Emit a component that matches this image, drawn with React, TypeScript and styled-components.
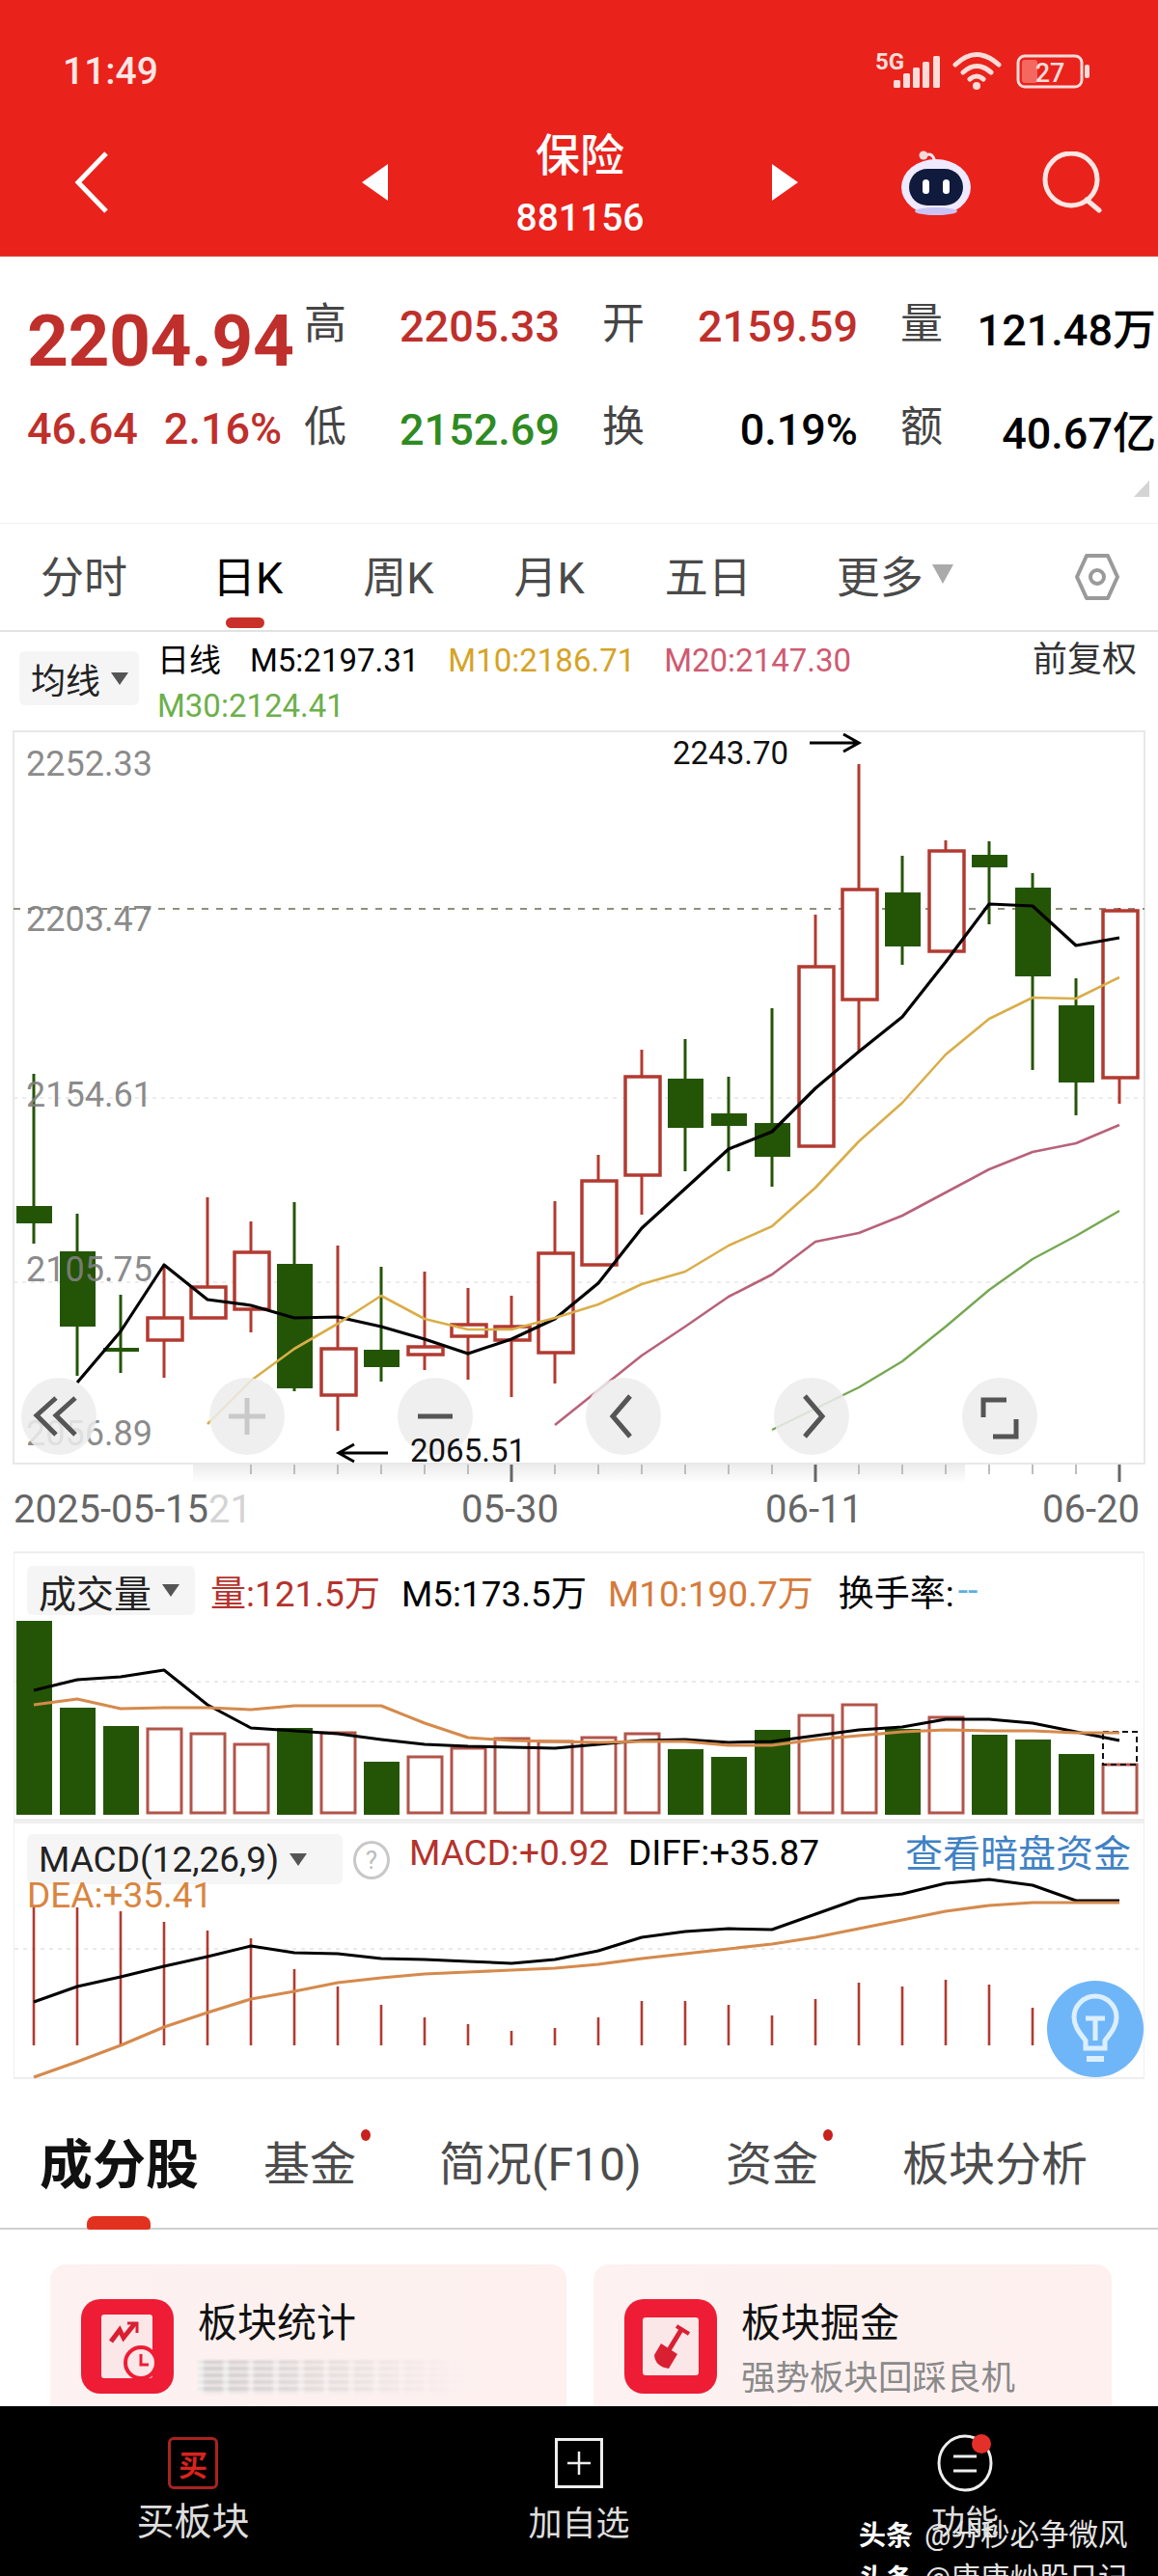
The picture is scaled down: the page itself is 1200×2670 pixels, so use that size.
import React from "react";
import styled, { createGlobalStyle } from "styled-components";

const FONT = `Roboto, "Noto Sans CJK SC", sans-serif`;
const RED = "#bf2f2b";
const GREEN = "#245506";
const BAR_RED = "#b23a30";

const GlobalStyle = createGlobalStyle`
  html, body { margin: 0; padding: 0; background: #fff; }
  body { font-family: ${FONT}; }
`;

const Page = styled.div`
  position: relative;
  width: 1200px;
  height: 2670px;
  overflow: hidden;
  background: #fff;
  color: #000;
`;

/* ---------- red header ---------- */
const Header = styled.header`
  height: 266px;
  background: #e9221c;
  color: #fff;
  border-bottom: 1px solid #d8453f;
  box-sizing: border-box;
`;
const StatusBar = styled.div`
  height: 130px;
  box-sizing: border-box;
  padding: 53px 70px 0 65px;
  display: flex;
  justify-content: space-between;
  align-items: flex-start;
`;
const Clock = styled.div`
  font-size: 39px;
  line-height: 42px;
  font-weight: 500;
  color: #fbe6e4;
`;
const NavBar = styled.nav`
  display: flex;
  align-items: center;
  height: 118px;
  padding-left: 77px;
`;
const NavCentre = styled.div`
  width: 398px;
  margin-top: 2px;
  display: flex;
  flex-direction: column;
  align-items: center;
`;
const Symbol = styled.div`
  font-size: 46px;
  line-height: 56px;
  font-weight: 500;
`;
const Code = styled.div`
  font-size: 39px;
  line-height: 44px;
  margin-top: 15px;
  font-weight: 500;
`;
const Spaced = styled.div<{ $left: number }>`
  margin-left: ${(p) => p.$left}px;
  display: flex;
`;

/* ---------- quote summary ---------- */
const Stats = styled.section`
  height: 277px;
  box-sizing: border-box;
  padding-top: 45px;
  display: flex;
  border-bottom: 1px solid #f2f2f2;
`;
const PriceBlock = styled.div`
  width: 315px;
  box-sizing: border-box;
  padding-left: 28px;
`;
const Price = styled.div`
  font-size: 75px;
  line-height: 84px;
  font-weight: 700;
  color: ${RED};
  letter-spacing: -0.5px;
`;
const Change = styled.div`
  margin-top: 23px;
  display: flex;
  gap: 27px;
  font-size: 45px;
  line-height: 54px;
  font-weight: 500;
  color: ${RED};
`;
const StatGrid = styled.div`
  display: grid;
  grid-template-columns: repeat(3, 265px);
  grid-auto-rows: 54px;
  column-gap: 44px;
  row-gap: 53px;
`;
const StatCell = styled.div`
  display: flex;
  justify-content: space-between;
  align-items: center;
`;
const StatName = styled.span`
  font-size: 44px;
  line-height: 50px;
  margin-top: -4px;
  color: #444;
`;
const StatValue = styled.span<{ $color?: string }>`
  font-size: 45px;
  font-weight: 500;
  color: ${(p) => p.$color ?? RED};
  white-space: nowrap;
`;
const CornerMark = styled.div`
  position: absolute;
  left: 1175px;
  top: 498px;
  width: 0;
  height: 0;
  border-left: 16px solid transparent;
  border-bottom: 17px solid #d4d4d4;
`;

/* ---------- period tabs ---------- */
const Periods = styled.div`
  height: 112px;
  box-sizing: border-box;
  padding: 0 40px 6px 42px;
  display: flex;
  align-items: center;
  border-bottom: 2px solid #e2e2e2;
  position: relative;
`;
const Period = styled.div<{ $active?: boolean; $gap: number }>`
  position: relative;
  font-size: 45px;
  color: ${(p) => (p.$active ? "#000" : "#4a4a4a")};
  margin-right: ${(p) => p.$gap}px;
  display: flex;
  align-items: center;
  ${(p) =>
    p.$active &&
    `&::after {
      content: "";
      position: absolute;
      left: 14px;
      top: 77px;
      width: 40px;
      height: 11px;
      border-radius: 6px;
      background: #c9302a;
    }`}
`;
const DownMark = styled.span`
  display: inline-block;
  margin-left: 9px;
  width: 0;
  height: 0;
  border-left: 11px solid transparent;
  border-right: 11px solid transparent;
  border-top: 20px solid #aaa;
`;
const GearSlot = styled.div`
  margin-left: auto;
  margin-top: 6px;
  display: flex;
`;

/* ---------- moving average legend ---------- */
const Legend = styled.div`
  height: 103px;
  box-sizing: border-box;
  display: flex;
  padding: 6px 22px 0 20px;
`;
const PickButton = styled.div`
  display: flex;
  align-items: center;
  box-sizing: border-box;
  background: #f5f5f5;
  border-radius: 6px;
  color: #222;
  white-space: nowrap;
`;
const LegendPick = styled(PickButton)`
  width: 124px;
  height: 56px;
  margin-top: 14px;
  padding-left: 12px;
  font-size: 36px;
`;
const SmallDown = styled.span`
  display: inline-block;
  margin-left: 11px;
  width: 0;
  height: 0;
  border-left: 9px solid transparent;
  border-right: 9px solid transparent;
  border-top: 13px solid #555;
`;
const LegendValues = styled.div`
  margin-left: 19px;
  width: 880px;
  display: flex;
  flex-wrap: wrap;
  column-gap: 30px;
  align-content: flex-start;
`;
const MaValue = styled.span<{ $color: string }>`
  font-size: 33px;
  line-height: 47px;
  color: ${(p) => p.$color};
  white-space: nowrap;
`;
const Adjust = styled.div`
  margin-left: auto;
  font-size: 36px;
  line-height: 47px;
  color: #333;
`;

/* ---------- candlestick chart ---------- */
const ChartArea = styled.div`
  position: relative;
  height: 780px;
`;
const ChartSvg = styled.svg`
  display: block;
  overflow: visible;
  font-family: ${FONT};
`;
const AxisText = styled.text`
  font-size: 36px;
  fill: #808080;
  fill-opacity: 0.92;
`;
const ExtremeText = styled.text`
  font-size: 33px;
  fill: #111;
`;
const LowMark = styled.span`
  position: absolute;
  left: 425px;
  top: 726px;
  font-size: 33px;
  line-height: 40px;
  color: #111;
`;
const Controls = styled.div`
  position: absolute;
  left: 22px;
  top: 670px;
  display: flex;
  gap: 117px;
`;
const ControlButton = styled.div`
  width: 78px;
  height: 80px;
  border-radius: 50%;
  background: rgba(236, 236, 236, 0.86);
  display: flex;
  align-items: center;
  justify-content: center;
`;
const DateAxis = styled.div`
  height: 52px;
  display: grid;
  grid-template-columns: 464px 315px 287px 1fr;
  padding-left: 14px;
  align-items: center;
  font-size: 40px;
  color: #666;
  white-space: nowrap;
`;
const FadedDate = styled.span`
  color: #d4d4d4;
`;

/* ---------- volume panel ---------- */
const Panel = styled.section`
  position: relative;
  margin: 18px 14px 0;
  border-left: 1px solid #eee;
  border-right: 1px solid #eee;
  border-top: 2px solid #eee;
`;
const VolumeHead = styled.div`
  height: 65px;
  box-sizing: border-box;
  padding: 12px 0 0 13px;
  display: flex;
  align-items: center;
  font-size: 37px;
  white-space: nowrap;
`;
const VolumePick = styled(PickButton)`
  width: 174px;
  height: 51px;
  padding-left: 12px;
  font-size: 39px;
  margin-right: 16px;
`;
const HeadValue = styled.span<{ $color: string; $gap?: number }>`
  color: ${(p) => p.$color};
  margin-right: ${(p) => p.$gap ?? 22}px;
`;
const MacdPanel = styled.section`
  position: relative;
  margin: 0 14px;
  border-left: 1px solid #eee;
  border-right: 1px solid #eee;
  border-top: 2px solid #eee;
  border-bottom: 2px solid #eee;
`;
const MacdHead = styled.div`
  height: 65px;
  box-sizing: border-box;
  padding: 11px 13px 0 13px;
  display: flex;
  align-items: flex-start;
  font-size: 37px;
  white-space: nowrap;
`;
const MacdPick = styled(PickButton)`
  width: 327px;
  height: 52px;
  padding-left: 12px;
  font-size: 37px;
`;
const Help = styled.div`
  margin: 7px 20px 0 11px;
  width: 32px;
  height: 34px;
  border: 3px solid #c8c8c8;
  border-radius: 50%;
  font-size: 26px;
  line-height: 34px;
  text-align: center;
  color: #bbb;
`;
const HeadText = styled.span<{ $color: string; $gap?: number }>`
  color: ${(p) => p.$color};
  line-height: 40px;
  margin-right: ${(p) => p.$gap ?? 20}px;
`;
const DarkPool = styled.span`
  margin-left: auto;
  font-size: 39px;
  line-height: 42px;
  color: #3f82c4;
`;
const DeaValue = styled.span`
  position: absolute;
  left: 13px;
  top: 55px;
  font-size: 37px;
  line-height: 40px;
  color: #d9853f;
`;
const BulbButton = styled.div`
  position: absolute;
  right: 0;
  bottom: 0;
  width: 100px;
  height: 100px;
  border-radius: 50%;
  background: #6fb6f8;
  display: flex;
  align-items: center;
  justify-content: center;
`;

/* ---------- section tabs ---------- */
const SectionTabs = styled.div`
  position: relative;
  height: 156px;
  box-sizing: border-box;
  padding: 18px 0 4px 41px;
  display: grid;
  grid-template-columns: 232px 182px 297px 183px 1fr;
  align-items: center;
  border-bottom: 2px solid #cfcfcf;
  white-space: nowrap;
`;
const SectionTab = styled.div<{ $active?: boolean; $dot?: boolean }>`
  position: relative;
  justify-self: start;
  font-size: ${(p) => (p.$active ? 55 : 48)}px;
  font-weight: ${(p) => (p.$active ? 700 : 400)};
  color: ${(p) => (p.$active ? "#111" : "#4c4c4c")};
  ${(p) =>
    p.$dot &&
    `&::after {
      content: "";
      position: absolute;
      right: -15px;
      top: 3px;
      width: 10px;
      height: 12px;
      border-radius: 50%;
      background: #c8201c;
    }`}
`;
const SectionMark = styled.div`
  position: absolute;
  left: 90px;
  bottom: -2px;
  width: 66px;
  height: 14px;
  border-radius: 8px 8px 3px 3px;
  background: #e2321f;
`;

/* ---------- tool cards ---------- */
const Cards = styled.div`
  height: 183px;
  box-sizing: border-box;
  overflow: hidden;
  padding: 36px 0 0 52px;
  display: grid;
  grid-template-columns: 535px 537px;
  column-gap: 28px;
`;
const Card = styled.div`
  height: 170px;
  border-radius: 16px 16px 0 0;
  background: linear-gradient(90deg, #fdf2f1 0%, #fdf0ef 100%);
  padding: 36px 0 0 32px;
  display: flex;
`;
const CardText = styled.div`
  margin-left: 25px;
`;
const CardTitle = styled.div`
  font-size: 41px;
  line-height: 50px;
  margin-top: 0;
  color: #111;
`;
const CardSub = styled.div`
  margin-top: 7px;
  font-size: 35.5px;
  line-height: 50px;
  color: #8a8a8a;
  white-space: nowrap;
`;
const Smudge = styled.div`
  margin-top: 14px;
  width: 282px;
  height: 34px;
  filter: blur(1.5px);
  background:
    linear-gradient(90deg, rgba(253, 241, 240, 0) 10%, #fdf1f0 100%),
    repeating-linear-gradient(90deg, rgba(255, 255, 255, 0.5) 0 6px, rgba(255, 255, 255, 0) 6px 26px),
    repeating-linear-gradient(180deg, #bdbdbd 0 2px, #ece6e5 2px 7px);
`;

/* ---------- bottom action bar ---------- */
const ActionBar = styled.footer`
  position: relative;
  height: 176px;
  background: #000;
  display: grid;
  grid-template-columns: repeat(3, 400px);
  overflow: hidden;
`;
const Action = styled.div`
  display: flex;
  flex-direction: column;
  align-items: center;
  padding-top: 32px;
`;
const ActionIcon = styled.div`
  position: relative;
  height: 54px;
  display: flex;
  align-items: center;
`;
const ActionLabel = styled.div<{ $size: number; $drop: number }>`
  margin-top: ${(p) => p.$drop}px;
  font-size: ${(p) => p.$size}px;
  line-height: 46px;
  color: #ddd;
`;
const BuyBox = styled.div`
  width: 52px;
  height: 54px;
  box-sizing: border-box;
  border: 3px solid #a8231f;
  border-radius: 6px;
  display: flex;
  align-items: center;
  justify-content: center;
  font-size: 30px;
  font-weight: 700;
  color: #d9231f;
`;
const Badge = styled.span`
  position: absolute;
  left: 36px;
  top: -3px;
  width: 20px;
  height: 20px;
  border-radius: 50%;
  background: #e5302a;
`;
const Watermark = styled.div`
  position: absolute;
  left: 890px;
  top: 112px;
  font-size: 30.5px;
  line-height: 44px;
  color: #e4e4e4;
  white-space: nowrap;
`;
const WatermarkBrand = styled.b`
  color: #fff;
  font-size: 28px;
  margin-right: 12px;
`;

/* ---------- chart data ---------- */
type Candle = [high: number, low: number, top: number, bottom: number, up: boolean];

const slotX = (i: number) => 35 + 45 * i;
const line = (start: number, ys: number[]) =>
  ys.map((y, i) => `${slotX(start + i)},${y}`).join(" ");

const candles: Candle[] = [
  [1113, 1289, 1250, 1268, false],
  [1258, 1426, 1297, 1375, false],
  [1342, 1423, 1397, 1401, false],
  [1311, 1428, 1364, 1389, true],
  [1241, 1366, 1332, 1366, true],
  [1266, 1381, 1296, 1357, true],
  [1246, 1442, 1310, 1439, false],
  [1291, 1483, 1396, 1446, true],
  [1313, 1432, 1399, 1417, false],
  [1318, 1420, 1394, 1404, true],
  [1335, 1430, 1371, 1385, true],
  [1343, 1448, 1373, 1389, true],
  [1245, 1434, 1297, 1402, true],
  [1197, 1312, 1222, 1311, true],
  [1088, 1259, 1114, 1218, true],
  [1077, 1214, 1118, 1169, false],
  [1116, 1214, 1154, 1167, false],
  [1045, 1230, 1164, 1199, false],
  [948, 1188, 1000, 1188, true],
  [792, 1089, 920, 1036, true],
  [887, 1000, 925, 981, false],
  [871, 986, 880, 986, true],
  [872, 958, 886, 899, false],
  [905, 1109, 920, 1012, false],
  [1014, 1156, 1042, 1122, false],
  [941, 1144, 942, 1117, true],
];

const ma5 = [1433, 1380, 1311, 1347, 1353, 1366, 1365, 1375, 1388, 1403, 1388, 1367, 1330, 1273, 1232, 1191, 1173, 1128, 1090, 1054, 997, 937, 939, 980, 972];
const ma10 = [1476, 1431, 1398, 1372, 1343, 1367, 1378, 1378, 1366, 1352, 1331, 1318, 1291, 1271, 1231, 1183, 1143, 1093, 1056, 1034, 1035, 1013];
const ma20 = [1477, 1441, 1405, 1375, 1344, 1321, 1287, 1278, 1260, 1236, 1212, 1194, 1185, 1166];
const ma30 = [1482, 1460, 1438, 1411, 1375, 1337, 1305, 1281, 1255];

const volumes: [number, boolean][] = [
  [1680, false], [1770, false], [1789, false], [1792, true], [1797, true], [1808, true],
  [1791, false], [1796, true], [1826, false], [1821, true], [1812, true], [1802, true],
  [1805, true], [1801, true], [1797, true], [1813, false], [1821, false], [1793, false],
  [1778, true], [1767, true], [1792, false], [1780, true], [1798, false], [1803, false],
  [1818, false], [1829, true],
];
const volMa5 = [1752, 1741, 1738, 1731, 1767, 1791, 1794, 1797, 1803, 1808, 1810, 1811, 1812, 1808, 1804, 1803, 1806, 1805, 1799, 1793, 1790, 1782, 1782, 1786, 1795, 1804];
const volMa10 = [1767, 1761, 1771, 1770, 1770, 1772, 1768, 1768, 1768, 1786, 1801, 1804, 1805, 1806, 1805, 1805, 1809, 1809, 1803, 1799, 1795, 1793, 1794, 1794, 1796, 1796];

const macdTops = [1975, 1977, 1981, 1992, 2001, 2009, 2041, 2059, 2078, 2091, 2098, 2105, 2102, 2091, 2074, 2074, 2078, 2089, 2072, 2055, 2059, 2052, 2057, 2081];
const diff = [2075, 2059, 2049, 2038, 2028, 2017, 2024, 2025, 2030, 2031, 2033, 2035, 2031, 2022, 2008, 2002, 1999, 2000, 1984, 1968, 1963, 1952, 1948, 1954, 1970, 1970];
const dea = [2153, 2137, 2120, 2101, 2086, 2072, 2064, 2055, 2050, 2046, 2044, 2042, 2040, 2036, 2030, 2025, 2020, 2015, 2008, 1999, 1990, 1981, 1975, 1972, 1972, 1972];

/* ---------- drawn icons ---------- */
const SignalIcon = () => (
  <svg width="222" height="42" viewBox="907 52 222 42" style={{ display: "block" }}>
    <text x="906" y="71" fontSize="24" fontWeight="700" fill="#fbdcd8" fontFamily={FONT}>5G</text>
    {[[925, 82], [935, 75], [945, 69], [955, 63], [966, 57]].map(([x, y]) => (
      <rect key={x} x={x} y={y} width="7" height={90 - y} rx="1.5" fill="#fbdcd8" />
    ))}
    <g fill="none" stroke="#fbdcd8" strokeWidth="5" strokeLinecap="round">
      <path d="M989 66 Q1011 45 1034 66" />
      <path d="M997 74 Q1011 61 1026 74" />
      <path d="M1004 81 Q1011 75 1018 81" />
    </g>
    <circle cx="1011" cy="88" r="4" fill="#fbdcd8" />
    <rect x="1054" y="57" width="66" height="32" rx="7" fill="none" stroke="#fbdcd8" strokeWidth="3" />
    <rect x="1058" y="61" width="16" height="24" rx="3" fill="#f4685f" />
    <rect x="1123" y="66" width="5" height="14" rx="2" fill="#fbdcd8" />
    <text x="1087" y="84" textAnchor="middle" fontSize="27" fontWeight="500" fill="#fbdcd8" fontFamily={FONT}>27</text>
  </svg>
);

const BackIcon = () => (
  <svg width="36" height="66" viewBox="0 0 36 66">
    <path d="M33 3 L4 33 L33 63" fill="none" stroke="#fff" strokeWidth="5" />
  </svg>
);
const Triangle = ({ flip }: { flip?: boolean }) => (
  <svg width="27" height="38" viewBox="0 0 27 38" style={{ transform: flip ? "scaleX(-1)" : undefined }}>
    <path d="M27 0 V38 L0 19 Z" fill="#fff" />
  </svg>
);
const RobotIcon = () => (
  <svg width="74" height="68" viewBox="0 0 74 68">
    <path d="M26 6 Q34 2 36 14" fill="none" stroke="#f3e7ee" strokeWidth="3" />
    <circle cx="24" cy="6" r="4.5" fill="#f6d9d9" />
    <ellipse cx="37" cy="39" rx="36" ry="29" fill="#efeaff" />
    <ellipse cx="37" cy="64" rx="22" ry="4" fill="#c9c4f5" />
    <rect x="9" y="20" width="56" height="38" rx="19" fill="#101a3c" />
    <rect x="23" y="31" width="7" height="15" rx="3.5" fill="#fff" />
    <rect x="44" y="31" width="7" height="15" rx="3.5" fill="#fff" />
  </svg>
);
const SearchIcon = () => (
  <svg width="62" height="64" viewBox="0 0 62 64">
    <circle cx="30" cy="29" r="27" fill="none" stroke="#fde6e3" strokeWidth="5" />
    <path d="M46 50 L59 61" stroke="#fde6e3" strokeWidth="5" strokeLinecap="round" />
  </svg>
);
const HexIcon = () => (
  <svg width="46" height="50" viewBox="0 0 46 50">
    <path d="M12 3 H34 L44 25 L34 47 H12 L2 25 Z" fill="none" stroke="#9a9a9a" strokeWidth="4" strokeLinejoin="round" />
    <circle cx="23" cy="25" r="7" fill="none" stroke="#9a9a9a" strokeWidth="4" />
  </svg>
);

const controlIcons = [
  <path key="a" d="M24 8 L4 26 L24 46 M44 8 L24 26 L44 46" fill="none" stroke="#555" strokeWidth="5" />,
  <path key="b" d="M27 8 V46 M8 27 H46" fill="none" stroke="#c9c9c9" strokeWidth="5" />,
  <path key="c" d="M9 27 H45" fill="none" stroke="#555" strokeWidth="5" />,
  <path key="d" d="M34 6 L16 27 L34 48" fill="none" stroke="#555" strokeWidth="5" />,
  <path key="e" d="M20 6 L38 27 L20 48" fill="none" stroke="#555" strokeWidth="5" />,
  <path key="f" d="M34 10 H10 V28 M20 48 H44 V30" fill="none" stroke="#555" strokeWidth="5" />,
];

const BulbIcon = () => (
  <svg width="56" height="76" viewBox="0 0 56 76" fill="none" stroke="#dcefff" strokeWidth="5">
    <path d="M18 50 C10 40 6 34 6 26 A22 22 0 0 1 50 26 C50 34 46 40 38 50 V58 H18 Z" />
    <path d="M18 27 H38 M28 27 V50" />
    <path d="M19 69 H37" strokeWidth="6" />
  </svg>
);

const ChartCardIcon = () => (
  <svg width="96" height="98" viewBox="0 0 96 98">
    <rect width="96" height="98" rx="20" fill="#ee1c34" />
    <rect x="21" y="16" width="53" height="66" rx="3" fill="#fbe6e8" />
    <path d="M31 44 L40 32 L44 40 L56 25" fill="none" stroke="#d92032" strokeWidth="5" />
    <path d="M48 25 H58 V35" fill="none" stroke="#d92032" strokeWidth="3" />
    <circle cx="62" cy="66" r="16" fill="#fbe6e8" stroke="#ee1c34" strokeWidth="4" />
    <path d="M62 57 V68 H70" fill="none" stroke="#ee1c34" strokeWidth="3" />
  </svg>
);
const ShovelCardIcon = () => (
  <svg width="96" height="98" viewBox="0 0 96 98">
    <rect width="96" height="98" rx="20" fill="#ee1c34" />
    <rect x="19" y="19" width="58" height="60" rx="3" fill="#fbe6e8" />
    <path d="M60 30 L46 53" stroke="#d92032" strokeWidth="5" />
    <path d="M54 28 L67 36" stroke="#d92032" strokeWidth="4" />
    <path d="M38 46 L55 57 L46 72 Q32 70 31 58 Z" fill="#d92032" />
  </svg>
);
const PlusBox = () => (
  <svg width="50" height="52" viewBox="0 0 50 52">
    <rect x="1.5" y="1.5" width="47" height="49" fill="none" stroke="#eee" strokeWidth="3" />
    <path d="M25 14 V38 M13 26 H37" stroke="#eee" strokeWidth="2.5" />
  </svg>
);
const MenuCircle = () => (
  <svg width="58" height="60" viewBox="0 0 58 60">
    <ellipse cx="29" cy="30" rx="27" ry="28" fill="none" stroke="#eee" strokeWidth="3" />
    <path d="M17 23 H41 M17 38 H41" stroke="#eee" strokeWidth="3" />
  </svg>
);

/* ---------- chart pieces ---------- */
const KLineChart = () => (
  <ChartSvg width="1200" height="780" viewBox="0 758 1200 780">
    <defs>
      <linearGradient id="axisShade" x1="0" y1="0" x2="0" y2="1">
        <stop offset="0" stopColor="#ececec" />
        <stop offset="1" stopColor="#fff" />
      </linearGradient>
    </defs>
    <rect x="14" y="758" width="1172" height="759" fill="#fff" stroke="#e8e8e8" strokeWidth="2" />
    <rect x="200" y="1518" width="800" height="20" fill="url(#axisShade)" />
    <line x1="14" x2="1186" y1="942" y2="942" stroke="#8f8f80" strokeWidth="2" strokeDasharray="7 8" />
    {[1138, 1329].map((y) => (
      <line key={y} x1="14" x2="1186" y1={y} y2={y} stroke="#e6e6e6" strokeWidth="1.5" strokeDasharray="4 5" />
    ))}
    {candles.map(([high, low, top, bottom, up], i) => {
      const x = slotX(i);
      const colour = up ? BAR_RED : GREEN;
      return (
        <g key={i}>
          <line x1={x} x2={x} y1={high} y2={low} stroke={colour} strokeWidth="3" />
          {up ? (
            <rect x={x - 17} y={top + 2} width="36" height={bottom - top - 2} fill="#fff" stroke={colour} strokeWidth="3.5" />
          ) : (
            <rect x={x - 18} y={top} width="37" height={bottom - top} fill={colour} />
          )}
        </g>
      );
    })}
    <polyline points={line(1, ma5)} fill="none" stroke="#000" strokeWidth="3.2" strokeLinejoin="round" />
    <polyline points={line(4, ma10)} fill="none" stroke="#d9ae4a" strokeWidth="2.6" strokeLinejoin="round" />
    <polyline points={line(12, ma20)} fill="none" stroke="#b8627a" strokeWidth="2.6" strokeLinejoin="round" />
    <polyline points={line(17, ma30)} fill="none" stroke="#76a852" strokeWidth="2.4" strokeLinejoin="round" />
    <AxisText x="27" y="804">2252.33</AxisText>
    <AxisText x="27" y="965">2203.47</AxisText>
    <AxisText x="27" y="1147">2154.61</AxisText>
    <AxisText x="27" y="1328">2105.75</AxisText>
    <AxisText x="27" y="1498">2056.89</AxisText>
    <ExtremeText x="697" y="792">2243.70</ExtremeText>
    <path d="M839 770 H890 M874 761 L890 770 L874 779" fill="none" stroke="#000" strokeWidth="3" />
    <path d="M402 1506 H351 M367 1497 L351 1506 L367 1515" fill="none" stroke="#000" strokeWidth="3" />
    {candles.slice(5).map((_, i) => {
      const x = slotX(i + 5);
      const major = x === 530 || x === 845 || x === 1160;
      return (
        <line key={x} x1={x} x2={x} y1="1518" y2={major ? 1536 : 1528} stroke={major ? "#666" : "#bdbdbd"} strokeWidth={major ? 3 : 2} />
      );
    })}
  </ChartSvg>
);

const VolumeChart = () => (
  <ChartSvg width="1170" height="213" viewBox="15 1675 1170 213">
    <line x1="15" x2="1185" y1="1743" y2="1743" stroke="#e4e4e4" strokeWidth="1.5" strokeDasharray="4 5" />
    {volumes.map(([top, up], i) => {
      const x = slotX(i);
      return up ? (
        <rect key={i} x={x - 17} y={top} width="35" height={1879 - top} fill="#fff" stroke="#b2544a" strokeWidth="3" />
      ) : (
        <rect key={i} x={x - 18} y={top} width="37" height={1881 - top} fill={GREEN} />
      );
    })}
    <rect x="1143" y="1795" width="35" height="34" fill="none" stroke="#111" strokeWidth="2" strokeDasharray="6 4" />
    <polyline points={line(0, volMa5)} fill="none" stroke="#000" strokeWidth="3" strokeLinejoin="round" />
    <polyline points={line(0, volMa10)} fill="none" stroke="#d58a4c" strokeWidth="3" strokeLinejoin="round" />
    <line x1="15" x2="1185" y1="1886.5" y2="1886.5" stroke="#e8e8e8" strokeWidth="2" />
  </ChartSvg>
);

const MacdChart = () => (
  <ChartSvg width="1170" height="198" viewBox="15 1955 1170 198">
    <line x1="15" x2="1185" y1="2020" y2="2020" stroke="#e4e4e4" strokeWidth="1.5" strokeDasharray="4 5" />
    {macdTops.map((top, i) => (
      <line key={i} x1={slotX(i)} x2={slotX(i)} y1={top} y2="2120" stroke={BAR_RED} strokeWidth="2.6" />
    ))}
    <polyline points={line(0, diff)} fill="none" stroke="#000" strokeWidth="3" strokeLinejoin="round" />
    <polyline points={line(0, dea)} fill="none" stroke="#d58a4c" strokeWidth="3.2" strokeLinejoin="round" />
  </ChartSvg>
);

export default function App() {
  return (
    <Page>
      <GlobalStyle />
      <Header>
        <StatusBar>
          <Clock>11:49</Clock>
          <SignalIcon />
        </StatusBar>
        <NavBar>
          <BackIcon />
          <Spaced $left={262}><Triangle /></Spaced>
          <NavCentre>
            <Symbol>保险</Symbol>
            <Code>881156</Code>
          </NavCentre>
          <Triangle flip />
          <Spaced $left={106}><RobotIcon /></Spaced>
          <Spaced $left={73}><SearchIcon /></Spaced>
        </NavBar>
      </Header>

      <Stats>
        <PriceBlock>
          <Price>2204.94</Price>
          <Change>
            <span>46.64</span>
            <span>2.16%</span>
          </Change>
        </PriceBlock>
        <StatGrid>
          <StatCell><StatName>高</StatName><StatValue>2205.33</StatValue></StatCell>
          <StatCell><StatName>开</StatName><StatValue>2159.59</StatValue></StatCell>
          <StatCell><StatName>量</StatName><StatValue $color="#000">121.48万</StatValue></StatCell>
          <StatCell><StatName>低</StatName><StatValue $color="#2e8b22">2152.69</StatValue></StatCell>
          <StatCell><StatName>换</StatName><StatValue $color="#000">0.19%</StatValue></StatCell>
          <StatCell><StatName>额</StatName><StatValue $color="#000">40.67亿</StatValue></StatCell>
        </StatGrid>
      </Stats>
      <CornerMark />

      <Periods>
        <Period $gap={88}>分时</Period>
        <Period $gap={83} $active>日K</Period>
        <Period $gap={83}>周K</Period>
        <Period $gap={83}>月K</Period>
        <Period $gap={88}>五日</Period>
        <Period $gap={0}>更多<DownMark /></Period>
        <GearSlot><HexIcon /></GearSlot>
      </Periods>

      <Legend>
        <LegendPick>均线<SmallDown /></LegendPick>
        <LegendValues>
          <MaValue $color="#000">日线</MaValue>
          <MaValue $color="#000">M5:2197.31</MaValue>
          <MaValue $color="#d6a326">M10:2186.71</MaValue>
          <MaValue $color="#cf5a72">M20:2147.30</MaValue>
          <MaValue $color="#6cb04a">M30:2124.41</MaValue>
        </LegendValues>
        <Adjust>前复权</Adjust>
      </Legend>

      <ChartArea>
        <KLineChart />
        <Controls>
          {controlIcons.map((icon, i) => (
            <ControlButton key={i}>
              <svg width="54" height="54" viewBox="0 0 54 54">{icon}</svg>
            </ControlButton>
          ))}
        </Controls>
        <LowMark>2065.51</LowMark>
      </ChartArea>
      <DateAxis>
        <span>2025-05-15<FadedDate>21</FadedDate></span>
        <span>05-30</span>
        <span>06-11</span>
        <span>06-20</span>
      </DateAxis>

      <Panel>
        <VolumeHead>
          <VolumePick>成交量<SmallDown /></VolumePick>
          <HeadValue $color="#b5322c">量:121.5万</HeadValue>
          <HeadValue $color="#000">M5:173.5万</HeadValue>
          <HeadValue $color="#d67a3a" $gap={26}>M10:190.7万</HeadValue>
          <HeadValue $color="#000" $gap={4}>换手率:</HeadValue>
          <HeadValue $color="#5bb0e0">--</HeadValue>
        </VolumeHead>
        <VolumeChart />
      </Panel>

      <MacdPanel>
        <MacdHead>
          <MacdPick>MACD(12,26,9)<SmallDown /></MacdPick>
          <Help>?</Help>
          <HeadText $color="#b5322c">MACD:+0.92</HeadText>
          <HeadText $color="#000">DIFF:+35.87</HeadText>
          <DarkPool>查看暗盘资金</DarkPool>
        </MacdHead>
        <MacdChart />
        <DeaValue>DEA:+35.41</DeaValue>
        <BulbButton><BulbIcon /></BulbButton>
      </MacdPanel>

      <SectionTabs>
        <SectionTab $active>成分股</SectionTab>
        <SectionTab $dot>基金</SectionTab>
        <SectionTab>简况(F10)</SectionTab>
        <SectionTab $dot>资金</SectionTab>
        <SectionTab>板块分析</SectionTab>
        <SectionMark />
      </SectionTabs>

      <Cards>
        <Card>
          <ChartCardIcon />
          <CardText>
            <CardTitle>板块统计</CardTitle>
            <Smudge />
          </CardText>
        </Card>
        <Card>
          <ShovelCardIcon />
          <CardText>
            <CardTitle>板块掘金</CardTitle>
            <CardSub>强势板块回踩良机</CardSub>
          </CardText>
        </Card>
      </Cards>

      <ActionBar>
        <Action>
          <ActionIcon><BuyBox>买</BuyBox></ActionIcon>
          <ActionLabel $size={39} $drop={11}>买板块</ActionLabel>
        </Action>
        <Action>
          <ActionIcon><PlusBox /></ActionIcon>
          <ActionLabel $size={35} $drop={14}>加自选</ActionLabel>
        </Action>
        <Action>
          <ActionIcon><MenuCircle /><Badge /></ActionIcon>
          <ActionLabel $size={35} $drop={13}>功能</ActionLabel>
        </Action>
        <Watermark>
          <div><WatermarkBrand>头条</WatermarkBrand>@分秒必争微风</div>
          <div><WatermarkBrand>头条</WatermarkBrand>@唐唐炒股日记</div>
        </Watermark>
      </ActionBar>
    </Page>
  );
}
